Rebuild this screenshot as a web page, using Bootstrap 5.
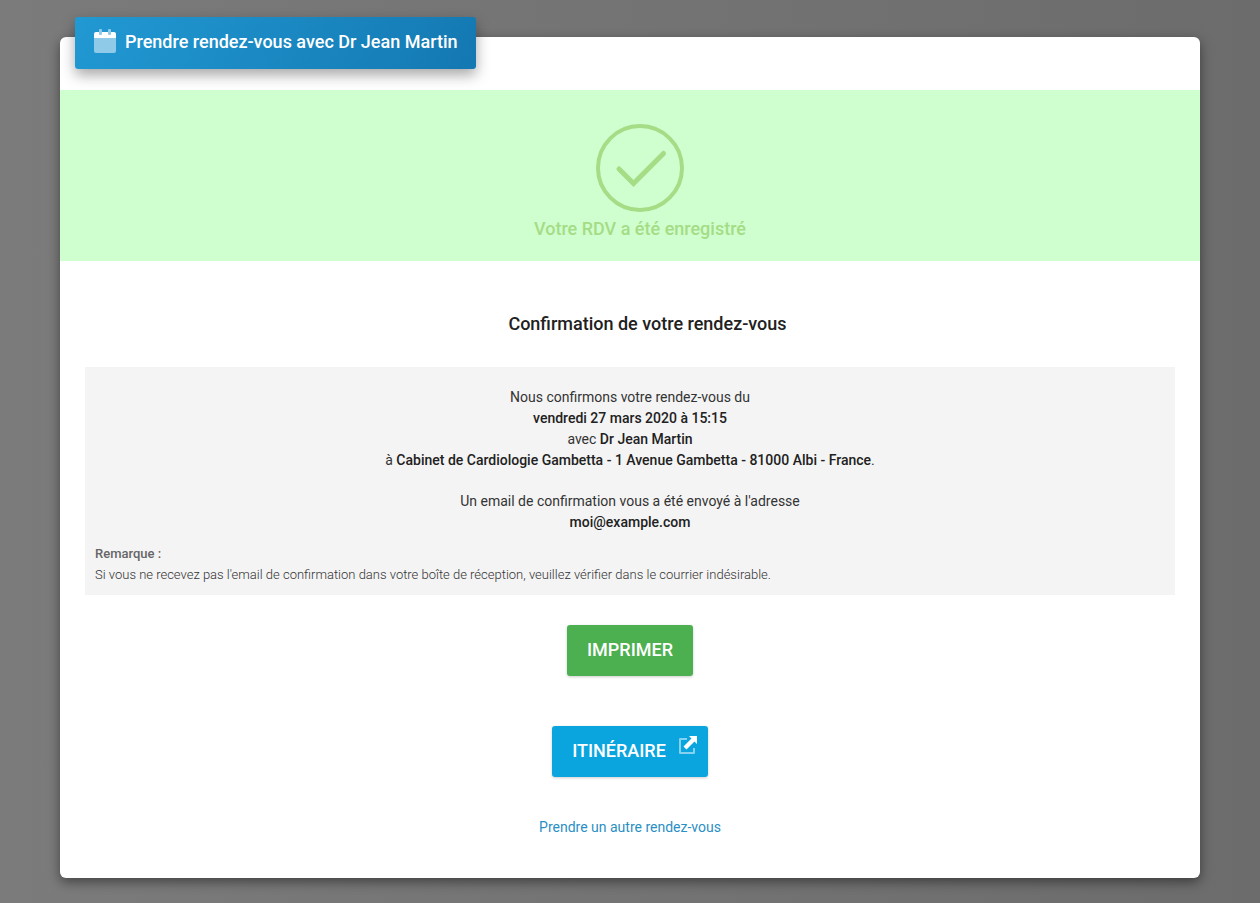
<!DOCTYPE html>
<html lang="fr">
<head>
<meta charset="utf-8">
<meta name="viewport" content="width=device-width, initial-scale=1">
<title>Prendre rendez-vous avec Dr Jean Martin</title>
<link href="https://cdn.jsdelivr.net/npm/bootstrap@5.3.0/dist/css/bootstrap.min.css" rel="stylesheet">
<style>
  body {
    font-family: Roboto, "Liberation Sans", sans-serif;
    font-size: 14px;
    line-height: 21px;
    font-weight: 400;
    color: #212121;
    background: linear-gradient(90deg, #7b7b7b, #6c6c6c);
    min-height: 100vh;
  }
  .page-wrap { padding-top: 37px; padding-bottom: 25px; }
  .booking {
    border: 0;
    border-radius: 6px;
    box-shadow: 0 4px 12px rgba(0, 0, 0, .45);
    color: inherit;
    padding-bottom: 40px;
  }
  .booking-title {
    margin: -20px 15px 21px;
    padding: 12px 18px;
    height: 52px;
    gap: 8px;
    border-radius: 3px;
    color: #fff;
    background: linear-gradient(120deg, #2199d3, #1478b2);
    box-shadow: 0 6px 14px rgba(0, 0, 0, .35);
  }
  .booking-title h1 { font-size: 18px; line-height: 26px; font-weight: 500; }
  .saved { background: #cfffcf; color: #a5dc86; height: 171px; padding: 34px 0 0 20px; }
  .saved p { font-size: 18px; line-height: 26px; font-weight: 500; margin-top: 4px; }
  .confirm-title { font-size: 18px; line-height: 26px; font-weight: 500; padding-left: 35px; margin: 50px 0 30px; }
  .summary { background: #f4f4f4; margin: 0 25px; padding: 20px 10px 10px; color: #333; }
  .summary strong { font-weight: 500; color: #212121; }
  .summary p { margin-bottom: 20px; }
  .summary .remark { font-size: 13px; font-weight: 300; color: #333; margin: -10px 0 0; }
  .summary .remark strong { font-weight: 500; color: #666; }
  .action {
    --bs-btn-color: #fff;
    --bs-btn-hover-color: #fff;
    --bs-btn-border-width: 0;
    --bs-btn-border-radius: 3px;
    --bs-btn-padding-x: 20px;
    --bs-btn-padding-y: 12px;
    --bs-btn-font-size: 18px;
    --bs-btn-line-height: 26px;
    --bs-btn-font-weight: 500;
    padding-bottom: 13px;
    box-shadow: 0 1px 3px rgba(0, 0, 0, .2);
  }
  .action-print { --bs-btn-bg: #4caf50; --bs-btn-hover-bg: #43a047; margin-top: 30px; }
  .action-route { --bs-btn-bg: #0aa5df; --bs-btn-hover-bg: #0794c9; margin-top: 50px; padding-right: 10px; }
  .action-route svg { margin: -3px 0 0 12px; }
  .again { color: #2b8fc4; margin-top: 40px; }
</style>
</head>
<body>
<main class="container page-wrap px-0">
  <div class="card booking">
    <header class="booking-title d-flex align-self-start">
      <svg width="24" height="24" viewBox="0 0 24 24" aria-hidden="true">
        <path d="M1 8h22v14a2 2 0 0 1-2 2H3a2 2 0 0 1-2-2z" fill="#90cae9"/>
        <path d="M3 3h18a2 2 0 0 1 2 2v4H1V5a2 2 0 0 1 2-2z" fill="#fff"/>
        <path d="M6 1a1 1 0 0 1 1-1h1a1 1 0 0 1 1 1v4a1 1 0 0 1-1 1H7a1 1 0 0 1-1-1zM15 1a1 1 0 0 1 1-1h1a1 1 0 0 1 1 1v4a1 1 0 0 1-1 1h-1a1 1 0 0 1-1-1z" fill="#90cae9"/>
      </svg>
      <h1 class="mb-0">Prendre rendez-vous avec Dr Jean Martin</h1>
    </header>

    <section class="saved d-flex flex-column align-items-center" role="status">
      <svg width="88" height="88" viewBox="0 0 88 88" fill="none" stroke="#a5dc86" aria-hidden="true">
        <circle cx="44" cy="44" r="42" stroke-width="4"/>
        <path d="M23 45l14.500 14.500L67.500 29.500" stroke-width="5" stroke-linecap="round"/>
      </svg>
      <p class="mb-0">Votre RDV a été enregistré</p>
    </section>

    <h2 class="confirm-title text-center">Confirmation de votre rendez-vous</h2>

    <section class="summary text-center">
      <p>Nous confirmons votre rendez-vous du<br>
        <strong>vendredi 27 mars 2020 à 15:15</strong><br>
        avec <strong>Dr Jean Martin</strong><br>
        à <strong>Cabinet de Cardiologie Gambetta - 1 Avenue Gambetta - 81000 Albi - France</strong>.</p>
      <p>Un email de confirmation vous a été envoyé à l'adresse<br>
        <strong>moi@example.com</strong></p>
      <p class="remark text-start"><strong>Remarque :</strong><br>
        Si vous ne recevez pas l'email de confirmation dans votre boîte de réception, veuillez vérifier dans le courrier indésirable.</p>
    </section>

    <div class="d-flex flex-column align-items-center">
      <button type="button" class="btn action action-print text-uppercase">Imprimer</button>
      <button type="button" class="btn action action-route text-uppercase d-flex align-items-start">Itinéraire
        <svg width="20" height="20" viewBox="0 0 20 20" aria-hidden="true">
          <path d="M9 4H2v14h14v-5" fill="none" stroke="#84d2ef" stroke-width="2" stroke-linejoin="round"/>
          <path d="M11 1h8v8l-2.500-2.500-8 8-3-3 8-8z" fill="#fff"/>
        </svg>
      </button>
      <a href="#" class="again text-decoration-none">Prendre un autre rendez-vous</a>
    </div>
  </div>
</main>
<script src="https://cdn.jsdelivr.net/npm/bootstrap@5.3.0/dist/js/bootstrap.bundle.min.js"></script>
</body>
</html>
